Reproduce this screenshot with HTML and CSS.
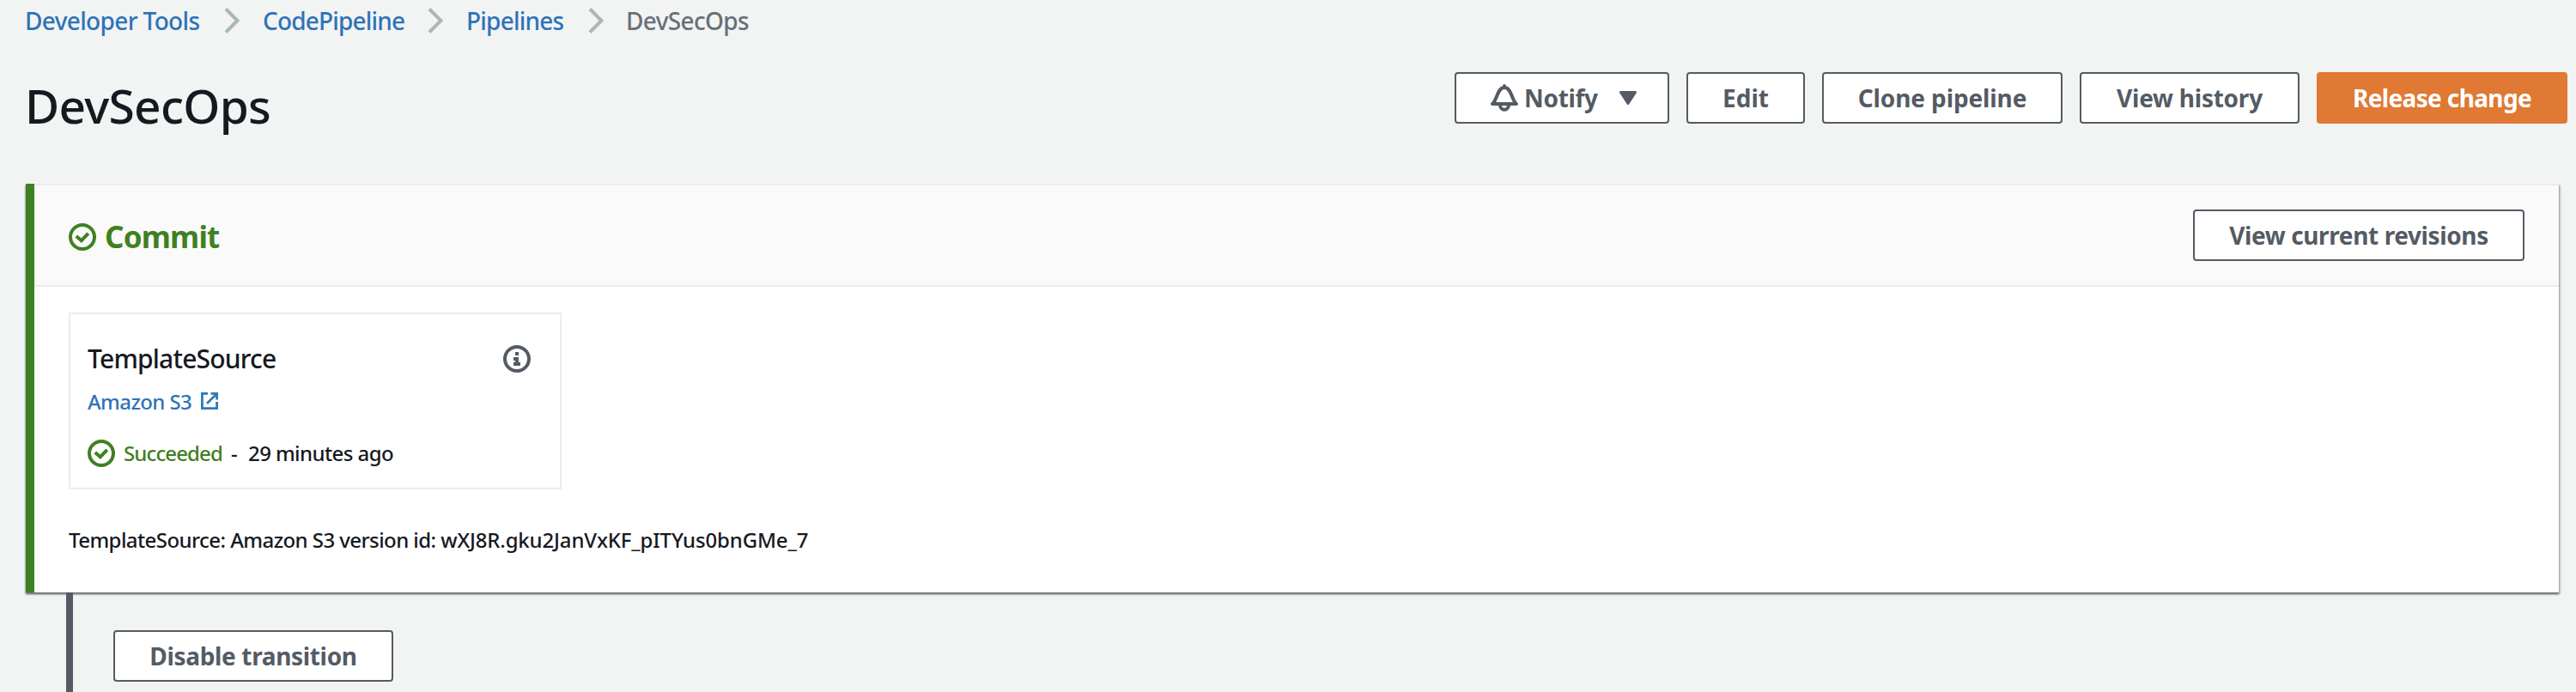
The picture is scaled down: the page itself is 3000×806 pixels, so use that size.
FILE: index.html
```html
<!DOCTYPE html>
<html lang="en">
<head>
<meta charset="utf-8">
<title>DevSecOps</title>
<link rel="stylesheet" href="styles.css">
</head>
<body>
<svg class="defs" aria-hidden="true">
  <symbol id="chevron" viewBox="0 0 18 30"><path d="M2 1.5 15.5 15 2 28.5" fill="none" stroke="currentColor" stroke-width="4"/></symbol>
  <symbol id="success" viewBox="0 0 32 32" fill="none" stroke="currentColor" stroke-width="4"><circle cx="16" cy="16" r="14"/><path d="M8.8 15l6 5.2 8-8.4"/></symbol>
</svg>

<nav class="breadcrumbs">
  <a class="crumb crumb-tools">Developer Tools</a>
  <svg class="chevron"><use href="#chevron"/></svg>
  <a class="crumb crumb-service">CodePipeline</a>
  <svg class="chevron"><use href="#chevron"/></svg>
  <a class="crumb crumb-list">Pipelines</a>
  <svg class="chevron"><use href="#chevron"/></svg>
  <span class="crumb crumb-current">DevSecOps</span>
</nav>

<header class="page-header">
  <h1 class="page-title">DevSecOps</h1>
  <div class="actions">
    <button class="button notify">
      <svg class="bell" viewBox="0 0 32 32" fill="none" stroke="currentColor" stroke-width="4" stroke-linejoin="round" stroke-linecap="round"><path d="M16 2v2M2 23h28C24.500 19 24.500 4 16 4S7.500 19 2 23z"/><path d="M11 24.500a5 5.300 0 0 0 10 0" stroke-linecap="butt"/></svg>
      <span>Notify</span>
      <svg class="caret" viewBox="0 0 20 16"><path d="M1.500 1.500h17L10 14.500z" fill="currentColor" stroke="currentColor" stroke-width="3" stroke-linejoin="round"/></svg>
    </button>
    <button class="button edit">Edit</button>
    <button class="button clone">Clone pipeline</button>
    <button class="button history">View history</button>
    <button class="button primary">Release change</button>
  </div>
</header>

<section class="stage">
  <div class="stage-header">
    <h2 class="stage-title"><svg class="status"><use href="#success"/></svg><span>Commit</span></h2>
    <button class="button revisions">View current revisions</button>
  </div>
  <div class="stage-body">
    <article class="action-card">
      <div class="action-head">
        <h3 class="action-name">TemplateSource</h3>
        <svg class="info" viewBox="0 0 32 32"><circle cx="16" cy="16" r="14" fill="none" stroke="currentColor" stroke-width="4"/><path d="M14 8h4v4h-4zM12 14h6v6h2v4h-8v-4h2v-2h-2z" fill="currentColor"/></svg>
      </div>
      <a class="provider"><span>Amazon S3</span><svg class="external" viewBox="0 0 20 20" fill="none" stroke="currentColor" stroke-width="2.800"><path d="M8 1.400H1.400v17.200h17.200V11M11.500 1.400h7.100v7.100M18.500 1.500 7 13"/></svg></a>
      <div class="result"><svg class="status"><use href="#success"/></svg><span class="succeeded">Succeeded</span><span class="dash">-</span><span class="time">29 minutes ago</span></div>
    </article>
    <p class="revision">TemplateSource: Amazon S3 version id: <span class="version-id">wXJ8R.gku2JanVxKF_pITYus0bnGMe_7</span></p>
  </div>
</section>

<div class="transition">
  <button class="button disable">Disable transition</button>
</div>
</body>
</html>
```
FILE: styles.css
```css
* { box-sizing: border-box; }
body {
  margin: 0;
  height: 806px;
  overflow: hidden;
  display: flex;
  flex-direction: column;
  background: #f2f4f3;
  color: #16191f;
  font-family: "Noto Sans", "Open Sans", sans-serif;
  font-weight: 500;
}
h1, h2, h3, p { margin: 0; font-weight: 500; }
svg { display: block; flex: none; }
.defs { position: absolute; width: 0; height: 0; }

.breadcrumbs {
  display: flex;
  align-items: center;
  height: 48px;
  padding-left: 29px;
  font-size: 28px;
  line-height: 38px;
  white-space: nowrap;
}
.crumb { color: #2e73b8; }
.crumb-tools { width: 232px; letter-spacing: -0.65px; }
.crumb-service { width: 176px; margin-left: 27px; letter-spacing: -0.82px; }
.crumb-list { width: 125px; margin-left: 27px; letter-spacing: -0.79px; }
.crumb-current { margin-left: 26px; color: #687078; letter-spacing: -0.66px; }
.chevron { width: 18px; height: 30px; color: #aab7b8; }
.crumb-service + .chevron { margin-left: 16px; }
.crumb-list + .chevron { margin-left: 17px; }

.page-header {
  display: flex;
  justify-content: space-between;
  height: 166px;
  padding: 36px 10px 0 29px;
}
.page-title { padding-top: 1px; font-size: 55px; line-height: 76px; letter-spacing: -0.71px; }
.actions { display: flex; gap: 20px; }

.button {
  display: flex;
  align-items: center;
  justify-content: center;
  height: 60px;
  padding: 0 0 1px;
  border: 2px solid #545b64;
  border-radius: 4px;
  background: #fff;
  color: #545b64;
  font: 700 28px/36px "Noto Sans", "Open Sans", sans-serif;
  letter-spacing: -0.3px;
  white-space: nowrap;
}
.notify { width: 250px; justify-content: flex-start; padding-left: 40px; }
.bell { width: 32px; height: 32px; margin-right: 7px; }
.caret { width: 20px; height: 16px; margin-left: 25px; }
.edit { width: 138px; letter-spacing: 0; }
.clone { width: 280px; letter-spacing: -0.11px; }
.history { width: 256px; letter-spacing: -0.25px; }
.primary { width: 292px; border-color: #df7933; background: #df7933; color: #fff; letter-spacing: -0.64px; }
.revisions { width: 386px; letter-spacing: -0.38px; }
.disable { width: 326px; letter-spacing: -0.34px; }

.stage {
  height: 476px;
  margin: 0 20px 0 30px;
  border-left: 10px solid #3f8022;
  background: #fff;
  box-shadow: 0 2px 2px #687078, 2px 2px 2px rgba(104, 112, 120, 0.35), -1px 2px 2px rgba(104, 112, 120, 0.25);
}
.stage-header {
  display: flex;
  align-items: center;
  justify-content: space-between;
  height: 120px;
  padding: 0 40px;
  border: solid #eaeded;
  border-width: 2px 0;
  background: #fafafa;
}
.stage-title {
  display: flex;
  align-items: center;
  gap: 10px;
  padding-top: 4px;
  color: #3f8022;
  font-size: 35px;
  font-weight: 700;
  line-height: 44px;
  letter-spacing: -0.8px;
}
.status { width: 32px; height: 32px; color: #3f8022; }
.stage-body { padding: 30px 40px 0; }
.action-card {
  width: 574px;
  height: 206px;
  padding: 31px 20px 0;
  border: 2px solid #eaeded;
}
.action-head { display: flex; justify-content: space-between; align-items: center; height: 42px; padding-right: 14px; }
.action-name { font-size: 30px; line-height: 42px; letter-spacing: -0.8px; }
.info { width: 32px; height: 32px; color: #545b64; }
.provider {
  display: flex;
  align-items: center;
  gap: 11px;
  height: 36px;
  margin-top: 11px;
  color: #2e73b8;
  font-size: 24px;
  line-height: 36px;
  letter-spacing: -0.6px;
}
.external { width: 20px; height: 20px; margin-top: -3px; color: #2e7bb8; }
.result { display: flex; align-items: center; height: 36px; margin-top: 24px; font-size: 24px; line-height: 36px; white-space: nowrap; }
.succeeded { width: 115px; margin-left: 10px; color: #3f8022; letter-spacing: -0.88px; }
.dash { width: 20px; margin-left: 10px; }
.time { letter-spacing: -0.58px; }
.revision { margin-top: 41px; font-size: 24px; line-height: 36px; letter-spacing: -0.57px; }
.version-id { letter-spacing: -0.16px; }

.transition {
  position: relative;
  height: 116px;
  margin-left: 77px;
  padding: 44px 0 0 47px;
  border-left: 8px solid #545b64;
}
```
